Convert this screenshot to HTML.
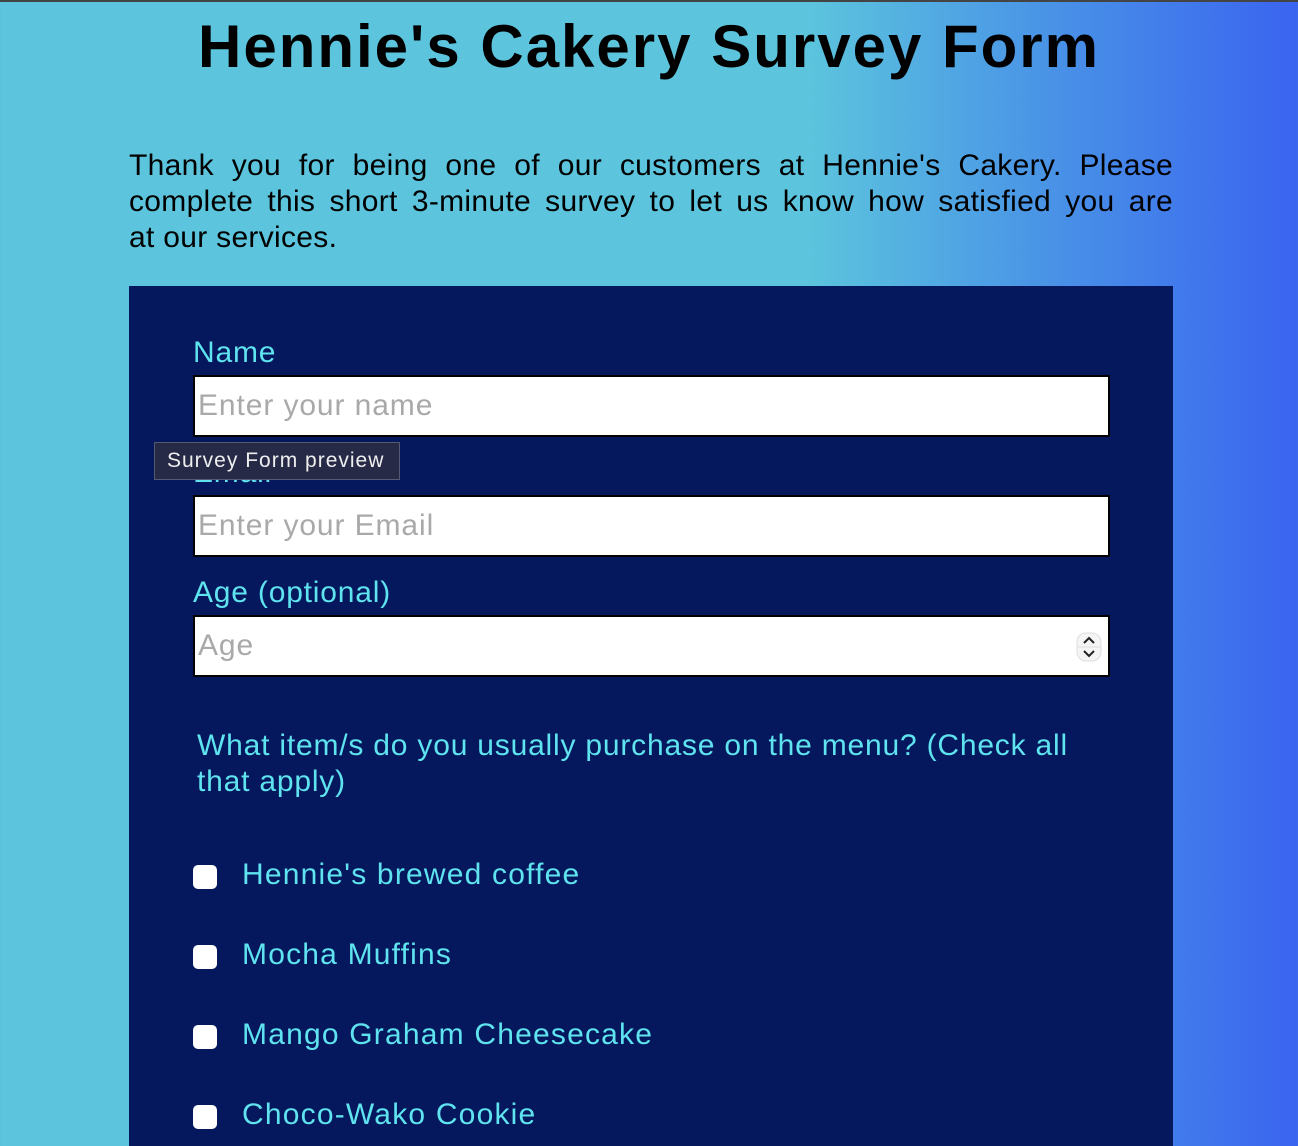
<!DOCTYPE html>
<html><head><meta charset="utf-8"><style>
html,body{margin:0;padding:0}
body{width:1298px;height:1138px;overflow:hidden;position:relative;
background:linear-gradient(90deg,#5cc5dd 0%,#5cc5dd 62%,#4a95e6 80%,#3a64f0 100%);
font-family:"Liberation Sans",Arial,sans-serif;border-top:2px solid #444;box-sizing:border-box}
h1{position:absolute;left:0;width:1298px;top:10px;margin:0;text-align:center;font-size:60px;font-weight:bold;color:#000;letter-spacing:2px}
.intro{position:absolute;left:129px;width:1044px;top:146px;font-size:30px;line-height:36px;color:#000;letter-spacing:0.3px}
.intro div{text-align:justify;text-align-last:justify;white-space:nowrap}
.intro div.last{text-align-last:left}
.form{position:absolute;left:129px;top:284px;width:1044px;height:860px;background:#05185e}
.lbl{position:absolute;left:64px;color:#5ee3ef;font-size:30px;letter-spacing:0.8px}
.inp{position:absolute;left:64px;width:910px;height:58px;background:#fff;border:2px solid #000;box-sizing:content-box;color:#a9a9a9;font-size:30px;line-height:58px;padding-left:3px;letter-spacing:0.9px}
.cb{position:absolute;left:64px;width:24px;height:24px;background:#fff;border-radius:5px}
.ci{position:absolute;left:113px;color:#5ee3ef;font-size:30px;letter-spacing:1.2px}
.tip{position:absolute;left:154px;top:440px;width:244px;height:36px;background:#272a47;border:1px solid #555a70;color:#eee;font-size:21px;line-height:36px;text-indent:12px;box-sizing:content-box;letter-spacing:1px}
</style></head><body>
<h1>Hennie's Cakery Survey Form</h1>
<div class="intro"><div>Thank you for being one of our customers at Hennie's Cakery. Please</div><div>complete this short 3-minute survey to let us know how satisfied you are</div><div class="last">at our services.</div></div>
<div class="form">
<div class="lbl" style="top:50px">Name</div>
<div class="inp" style="top:89px">Enter your name</div>
<div class="lbl" style="top:170px">Email</div>
<div class="inp" style="top:209px">Enter your Email</div>
<div class="lbl" style="top:290px">Age (optional)</div>
<div class="inp" style="top:329px">Age
<svg style="position:absolute;right:6px;top:15px" width="26" height="30" viewBox="0 0 26 30"><rect x="1" y="1" width="24" height="28" rx="9" fill="#f5f5f5" stroke="#ddd"/><line x1="2" y1="15" x2="24" y2="15" stroke="#ddd"/><path d="M8 11 L13 6 L18 11" fill="none" stroke="#222" stroke-width="2"/><path d="M8 19 L13 24 L18 19" fill="none" stroke="#222" stroke-width="2"/></svg></div>
<div class="lbl" style="top:442px;left:68px;line-height:36px;width:920px">What item/s do you usually purchase on the menu? (Check all<br>that apply)</div>
<div class="cb" style="top:579px"></div><div class="ci" style="top:572px">Hennie's brewed coffee</div>
<div class="cb" style="top:659px"></div><div class="ci" style="top:652px">Mocha Muffins</div>
<div class="cb" style="top:739px"></div><div class="ci" style="top:732px">Mango Graham Cheesecake</div>
<div class="cb" style="top:819px"></div><div class="ci" style="top:812px">Choco-Wako Cookie</div>
</div>
<div class="tip">Survey Form preview</div>
</body></html>
